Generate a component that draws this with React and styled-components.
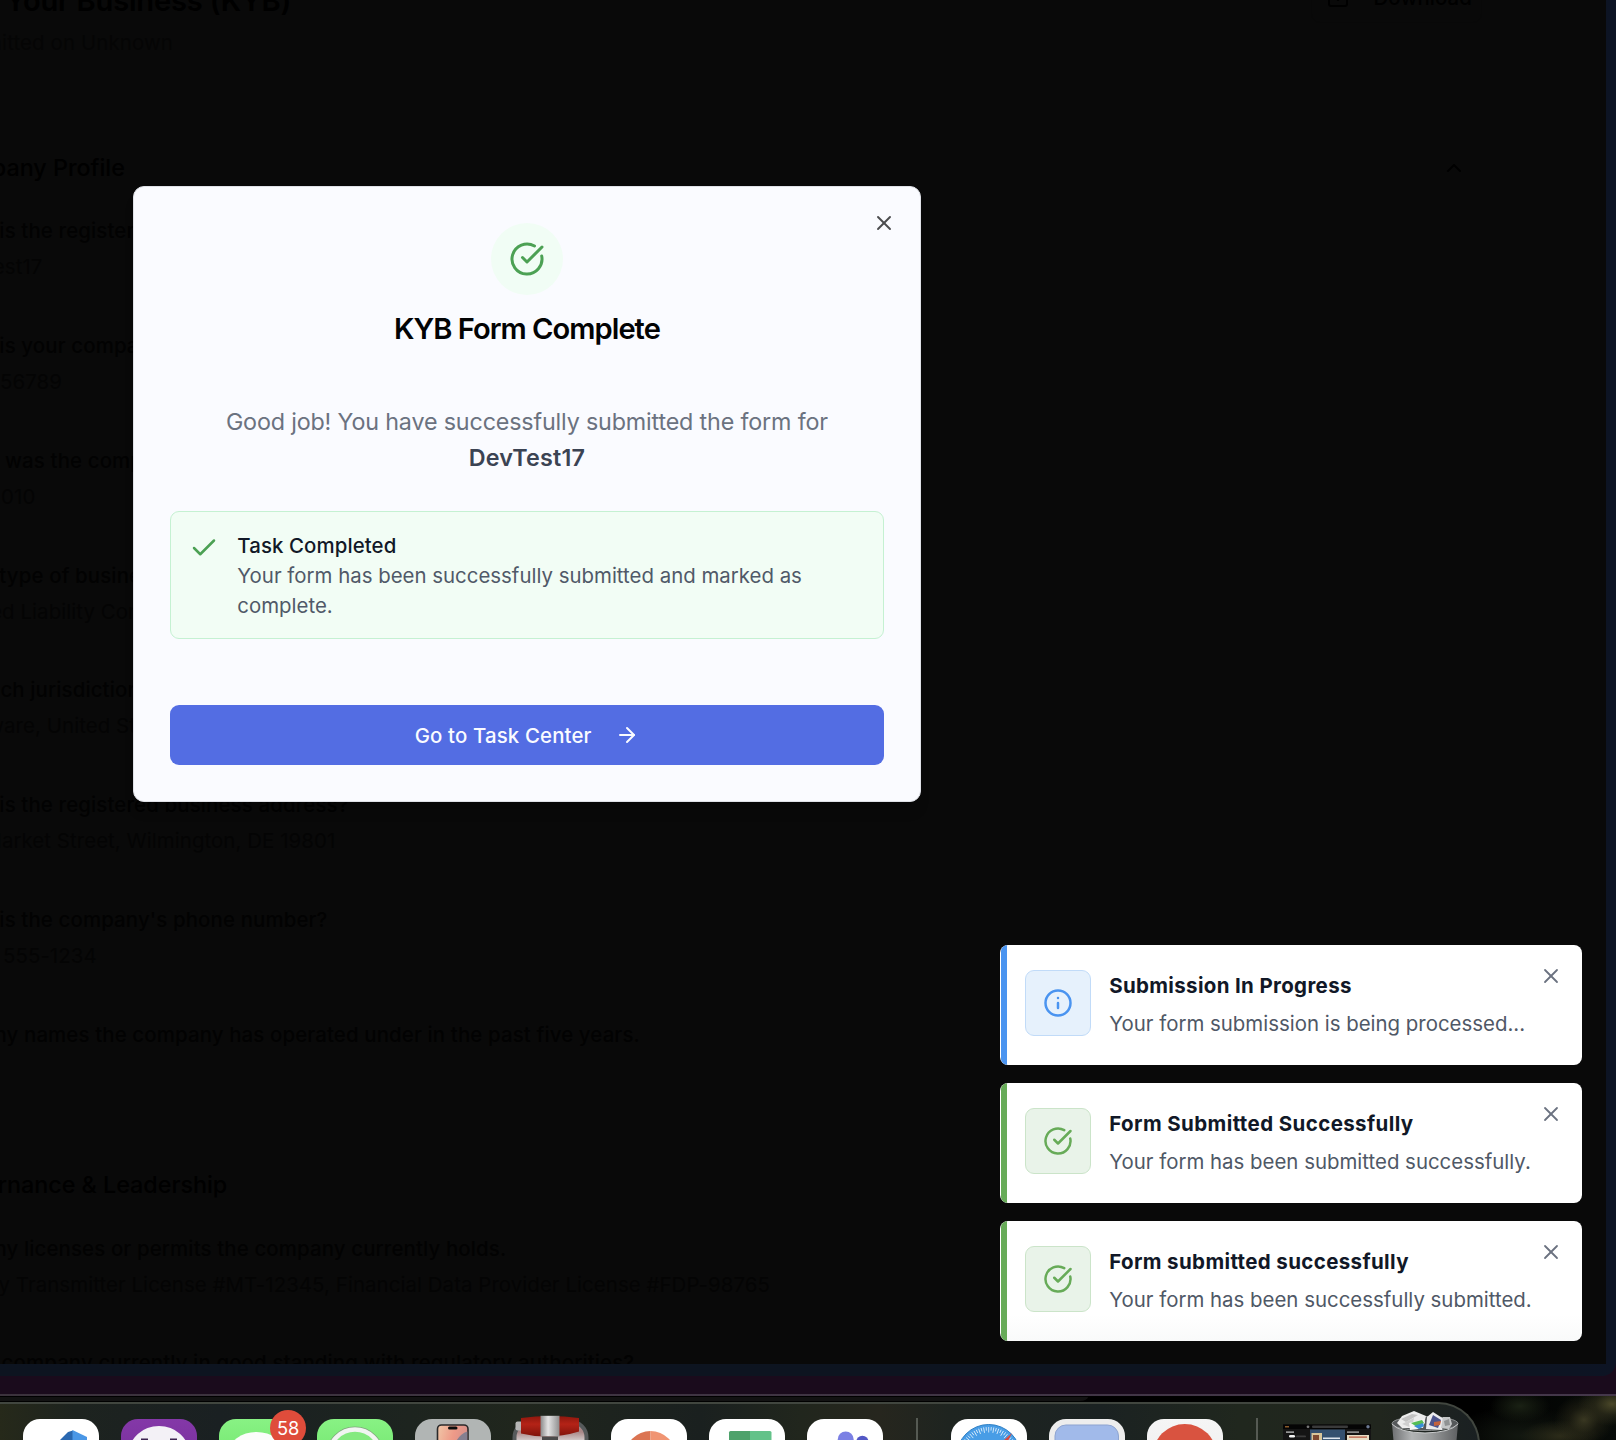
import React from "react";
import styled, { createGlobalStyle } from "styled-components";
import { ArrowRight, Check, ChevronUp, CircleCheckBig, Download, Info, X } from "lucide-react";

const Global = createGlobalStyle`
  * { box-sizing: border-box; }
  body {
    margin: 0;
    background: #000;
    font-family: Inter, "Liberation Sans", sans-serif;
    -webkit-font-smoothing: antialiased;
  }
  h1, h2, h3, p { margin: 0; }
  button { font: inherit; border: 0; background: none; padding: 0; }
  svg { display: block; flex: none; }
`;

/* ---------- desktop and browser window ---------- */

const Desktop = styled.div`
  position: relative;
  width: 1616px;
  height: 1440px;
  overflow: hidden;
  display: flex;
  flex-direction: column;
  background: #000;
`;

const Backdrop = styled.div`
  background: #1a0b1c;
  height: 1394px;
  flex: none;
`;

const Window = styled.div`
  height: 1376px;
  padding: 0 10px 12px 0;
  background: linear-gradient(90deg, #0d1420 0%, #0d1420 90%, #0d1424 100%);
  border-bottom-right-radius: 14px;
`;

const Page = styled.main`
  height: 1364px;
  overflow: hidden;
  background: #090909;
  display: flex;
  flex-direction: column;
`;

const PageHeader = styled.header`
  display: flex;
  justify-content: space-between;
  align-items: flex-start;
  flex: none;
  height: 80px;
  margin: -22px 124px 91.5px 0;
`;

const HeaderText = styled.div`
  margin-left: -81px;
  white-space: nowrap;
`;

const PageTitle = styled.h1`
  margin-bottom: 5px;
  font-size: 29.1px;
  line-height: 45px;
  font-weight: 600;
  letter-spacing: -0.2px;
  color: #000;
`;

const PageMeta = styled.p`
  margin-left: 27px;
  font-size: 20.4px;
  line-height: 30px;
  letter-spacing: 0.14px;
  color: #050505;
`;

const DownloadButton = styled.button`
  display: flex;
  align-items: center;
  gap: 23px;
  height: 52px;
  margin-top: -7px;
  padding: 0 9px 0 14px;
  border: 1px solid #080808;
  border-radius: 9px;
  font-size: 20.4px;
  font-weight: 500;
  letter-spacing: 0.1px;
  color: #000;
`;

const Section = styled.section`
  flex: none;
  margin: 0 0 78px -58px;
  white-space: nowrap;
`;

const SectionHead = styled.div`
  display: flex;
  align-items: center;
  justify-content: space-between;
  height: 36px;
  margin: 0 140px 27.4px -2px;
  color: #000;
`;

const SectionTitle = styled.h2`
  font-size: 23.3px;
  line-height: 36px;
  font-weight: 500;
`;

const Answers = styled.div`
  display: flex;
  flex-direction: column;
  gap: 42.9px;
`;

const Question = styled.p`
  font-size: 20.4px;
  line-height: 36px;
  font-weight: 500;
  letter-spacing: 0.14px;
  color: #020202;
`;

const Answer = styled.p`
  height: 36px;
  margin-left: 2px;
  font-size: 20.4px;
  line-height: 36px;
  letter-spacing: 0.08px;
  color: #040404;
`;

/* ---------- completion dialog ---------- */

const Dialog = styled.div`
  position: absolute;
  left: 133.3px;
  top: 186px;
  width: 788.2px;
  height: 615.7px;
  padding: 36px 36px 0;
  border: 1px solid #dfe1e7;
  border-radius: 11px;
  background: #fafbff;
  box-shadow: 0 12px 14px -6px rgba(0, 0, 0, 0.25);
  display: flex;
  flex-direction: column;
  align-items: center;
`;

const DialogClose = styled.button`
  position: absolute;
  top: 24px;
  right: 24.2px;
  color: #4b4c4e;
`;

const Medal = styled.div`
  width: 72px;
  height: 72px;
  border-radius: 50%;
  background: #f1fdf5;
  color: #4ca154;
  display: grid;
  place-items: center;
`;

const DialogTitle = styled.h2`
  margin: 15.5px 0 0 -1px;
  font-size: 29.1px;
  line-height: 36px;
  font-weight: 600;
  letter-spacing: -0.97px;
  color: #020304;
`;

const DialogText = styled.p`
  margin: 57px 0 0 -1px;
  text-align: center;
  font-size: 23.3px;
  line-height: 36px;
  letter-spacing: -0.16px;
  white-space: nowrap;
  color: #6b7280;
`;

const Company = styled.strong`
  display: block;
  font-weight: 600;
  letter-spacing: 0.2px;
  color: #3b4353;
`;

const Notice = styled.div`
  display: flex;
  gap: 18px;
  width: 100%;
  height: 127.7px;
  margin-top: 35.7px;
  padding: 18px;
  border: 1px solid #c5f1d2;
  border-radius: 9px;
  background: #f2fdf5;
  color: #4ca154;

  & > svg { margin-top: 3px; }
  & > div { padding-top: 1px; }
`;

const NoticeTitle = styled.h3`
  font-size: 20.4px;
  line-height: 30px;
  font-weight: 500;
  letter-spacing: 0.1px;
  color: #111827;
`;

const NoticeText = styled.p`
  font-size: 20.4px;
  line-height: 30px;
  letter-spacing: 0.01px;
  color: #505968;
`;

const PrimaryButton = styled.button`
  display: flex;
  align-items: center;
  justify-content: center;
  gap: 23.5px;
  width: 100%;
  height: 60px;
  margin-top: 66.3px;
  padding-right: 1px;
  border-radius: 9px;
  background: #536de3;
  color: #fafbff;
  font-size: 20.4px;
  font-weight: 500;
  letter-spacing: 0.14px;
`;

/* ---------- toasts ---------- */

const tones = {
  info: { bar: "#4a94f0", tint: "#e6f1fc", edge: "#c1dbf8" },
  success: { bar: "#67ab58", tint: "#e9f3e9", edge: "#cbe4c9" },
};

const ToastStack = styled.div`
  position: absolute;
  left: 1000px;
  top: 945px;
  display: flex;
  flex-direction: column;
  gap: 18px;
`;

const Toast = styled.div`
  width: 582px;
  height: 120px;
  padding-left: 1px;
  border-radius: 8px;
  background: ${(p) => (p.$last ? "linear-gradient(#fff 78%, #f9fafa)" : "#fff")};
  display: flex;
  overflow: hidden;
`;

const ToastBar = styled.div`
  width: 6px;
  flex: none;
  margin-right: 18px;
  border-radius: 7px 0 0 7px / 7px 0 0 7px;
  background: ${(p) => tones[p.$tone].bar};
`;

const ToastIcon = styled.div`
  width: 66px;
  height: 66px;
  flex: none;
  margin: 25px 18.2px 0 0;
  border: 1px solid ${(p) => tones[p.$tone].edge};
  border-radius: 9px;
  background: ${(p) => tones[p.$tone].tint};
  color: ${(p) => tones[p.$tone].bar};
  display: grid;
  place-items: center;
`;

const ToastBody = styled.div`
  flex: 1;
  padding-top: 25.6px;
  white-space: nowrap;
`;

const ToastTitle = styled.h3`
  font-size: 20.5px;
  line-height: 30px;
  font-weight: 700;
  letter-spacing: ${(p) => p.$spacing}px;
  color: #111827;
`;

const ToastText = styled.p`
  margin-top: 8px;
  font-size: 20.4px;
  line-height: 30px;
  letter-spacing: 0.01px;
  color: #4f5866;
`;

const ToastClose = styled.button`
  align-self: flex-start;
  margin: 19px 19px 0 0;
  color: #6b7280;
`;

/* ---------- dock ---------- */

const WindowEdge = styled.div`
  height: 2px;
  flex: none;
  background: linear-gradient(90deg, #3b323c, #44374a);
`;

const Wallpaper = styled.div`
  flex: 1;
  padding-top: 1px;
  background:
    radial-gradient(ellipse 34px 22px at 1612px 8px, #4b4829 0%, rgba(56, 54, 32, 0.5) 50%, transparent 100%),
    radial-gradient(ellipse 30px 26px at 1584px 24px, rgba(70, 67, 40, 0.8) 0%, rgba(46, 44, 26, 0.45) 50%, transparent 100%),
    radial-gradient(ellipse 40px 16px at 1560px 40px, rgba(58, 56, 32, 0.7) 0%, transparent 100%),
    radial-gradient(ellipse 30px 16px at 1520px 10px, #1a2114 0%, transparent 100%),
    radial-gradient(ellipse 70px 30px at 1520px 40px, #121710 0%, transparent 100%),
    linear-gradient(90deg, #000 1480px, #070b08 1616px);
`;

const UnderWindow = styled.div`
  width: 1088px;
  height: 4px;
  margin-bottom: 1px;
  background: #121212;
  border-bottom-right-radius: 8px 4px;
`;

const DockBar = styled.div`
  display: flex;
  width: 1480px;
  height: 60px;
  padding: 15px 0 0 23.2px;
  border: solid #41463f;
  border-width: 2px 2px 0 0;
  border-top-right-radius: 42px;
  background: linear-gradient(
    90deg,
    #26291a 0px,
    #1d231f 75px,
    #1a2022 220px,
    #1d241f 410px,
    #20261d 520px,
    #1a201f 700px,
    #21261d 800px,
    #26261e 880px,
    #1e2420 950px,
    #1b2222 1100px,
    #20271e 1240px,
    #21261e 1380px,
    #1a2022 1480px
  );
`;

const DockIcon = styled.div`
  position: relative;
  width: 75.6px;
  height: 75.6px;
  flex: none;
  margin-right: ${(p) => p.$gap ?? 22.4}px;
`;

const Tile = styled.svg.attrs((p) => ({
  viewBox: `0 0 ${p.$w ?? 75.6} 75.6`,
  width: p.$w ?? 75.6,
  height: 75.6,
}))`
  border-radius: ${(p) => (p.$bare ? 0 : 17)}px;
  overflow: ${(p) => (p.$bare ? "visible" : "hidden")};
  background: ${(p) => p.$bg};
`;

const Badge = styled.span`
  position: absolute;
  left: 51px;
  top: -9px;
  width: 36px;
  height: 36px;
  border-radius: 50%;
  background: #df4c3b;
  color: #fff;
  font-size: 18.3px;
  line-height: 36px;
  text-align: center;
`;

const DockDivider = styled.div`
  width: 2px;
  height: 70px;
  flex: none;
  margin: -1px ${(p) => p.$after}px 0 0;
  background: #555a53;
`;

const fields = {
  profile: [
    ["What is the registered name?", "DevTest17"],
    ["What is your company's tax ID?", "12-3456789"],
    ["When was the company formed?", "10/1/2010"],
    ["What type of business is it?", "Limited Liability Company"],
    ["In which jurisdiction?", "Delaware, United States"],
    ["What is the registered business address?", "123 Market Street, Wilmington, DE 19801"],
    ["What is the company's phone number?", "(302) 555-1234"],
    ["List any names the company has operated under in the past five years.", ""],
  ],
  governance: [
    [
      "List any licenses or permits the company currently holds.",
      "Money Transmitter License #MT-12345, Financial Data Provider License #FDP-98765",
    ],
    ["Is the company currently in good standing with regulatory authorities?", ""],
  ],
};

function FormSection({ title, items, open }) {
  return (
    <Section>
      <SectionHead>
        <SectionTitle>{title}</SectionTitle>
        {open && <ChevronUp size={24} strokeWidth={2} />}
      </SectionHead>
      <Answers>
        {items.map(([q, a]) => (
          <div key={q}>
            <Question>{q}</Question>
            <Answer>{a}</Answer>
          </div>
        ))}
      </Answers>
    </Section>
  );
}

const toasts = [
  { tone: "info", title: "Submission In Progress", text: "Your form submission is being processed...", spacing: 0.34 },
  { tone: "success", title: "Form Submitted Successfully", text: "Your form has been submitted successfully.", spacing: 0.4 },
  { tone: "success", title: "Form submitted successfully", text: "Your form has been successfully submitted.", spacing: 0.37 },
];

const ticks = Array.from({ length: 61 }, (_, i) => -150 + i * 5);

function Dock() {
  return (
    <DockBar>
      <DockIcon>
        <Tile $bg="#fff">
          <path d="M30 30 L37 21 L45 13 L50 11.5 V30Z" fill="#2a68b0" />
          <path d="M49.5 11 L64 18 V30 H49.5Z" fill="#4a97e6" />
        </Tile>
      </DockIcon>
      <DockIcon>
        <Tile $bg="linear-gradient(#8438a8, #6f2a92)">
          <ellipse cx="38" cy="34" rx="30" ry="27" fill="#f3f1f6" />
          <path d="M21 22 v-1.5 h6 M55 22 v-1.5 h-6" stroke="#3c2450" strokeWidth="2" fill="none" />
        </Tile>
      </DockIcon>
      <DockIcon>
        <Tile $bg="linear-gradient(#88f284, #62dc60)">
          <ellipse cx="37.5" cy="34" rx="28" ry="21" fill="#fbfdfb" />
        </Tile>
        <Badge>58</Badge>
      </DockIcon>
      <DockIcon>
        <Tile $bg="linear-gradient(#88f284, #62dc60)">
          <circle cx="38" cy="36.5" r="26" fill="none" stroke="#7fa67c" strokeWidth="6" />
          <circle cx="38" cy="36.5" r="26" fill="#84ea7f" stroke="#f1f5f1" strokeWidth="4.5" />
        </Tile>
      </DockIcon>
      <DockIcon>
        <Tile $bg="#b1b5b4">
          <defs>
            <linearGradient id="phone" x1="0" y1="0" x2="1" y2="0.6">
              <stop offset="0" stopColor="#f0c8a8" />
              <stop offset="0.45" stopColor="#ee9a88" />
              <stop offset="1" stopColor="#c98a8c" />
            </linearGradient>
          </defs>
          <rect x="22.5" y="6" width="30.5" height="62" rx="4" fill="url(#phone)" stroke="#2b2a2b" strokeWidth="1.6" />
          <path d="M38 30 Q42 16 52.3 12.5 V30Z" fill="#857f90" />
          <rect x="33" y="7.5" width="9.5" height="3" rx="1.5" fill="#0c0c0c" />
        </Tile>
      </DockIcon>
      <DockIcon>
        <Tile $bare $bg="transparent">
          <defs>
            <linearGradient id="band" x1="0" y1="0" x2="1" y2="0">
              <stop offset="0" stopColor="#8a8a8a" />
              <stop offset="0.4" stopColor="#e4e4e4" />
              <stop offset="1" stopColor="#8e8e8e" />
            </linearGradient>
            <linearGradient id="body" x1="0" y1="0" x2="0" y2="1">
              <stop offset="0" stopColor="#8e170d" />
              <stop offset="0.4" stopColor="#b42317" />
              <stop offset="1" stopColor="#7f130b" />
            </linearGradient>
            <linearGradient id="panel" x1="0" y1="0" x2="0" y2="1">
              <stop offset="0.15" stopColor="#a88" />
              <stop offset="0.3" stopColor="#dcdada" />
            </linearGradient>
          </defs>
          <rect x="1.5" y="2.5" width="72" height="70" rx="16" fill="url(#panel)" stroke="#565a5b" strokeWidth="4" />
          <rect x="2.5" y="2.5" width="7" height="9" rx="2" fill="#b5b5b5" />
          <path d="M8 -1 Q37 -5 66 -1 V12.5 Q37 21.5 8 14.5Z" fill="url(#body)" />
          <path d="M27.5 -3.2 h19 V17.5 h-19Z" fill="url(#band)" />
          <path d="M29 17.5 h16 v6 h-16Z" fill="#4b4b4b" />
        </Tile>
      </DockIcon>
      <DockIcon>
        <Tile $bg="#fff">
          <path d="M39.5 12 a25.5 25.5 0 0 0 0 51Z" fill="#db7452" />
          <path d="M39.5 12 a25.5 25.5 0 0 1 0 51Z" fill="#f09573" />
        </Tile>
      </DockIcon>
      <DockIcon>
        <Tile $bg="#fff">
          <path d="M20 30 V13.5 q0-1.5 1.5-1.5 H41 V30Z" fill="#4ea26b" />
          <path d="M41 12 H61 q1.5 0 1.5 1.5 V30 H41Z" fill="#63c289" />
        </Tile>
      </DockIcon>
      <DockIcon $gap={33.6}>
        <Tile $bg="#fff">
          <circle cx="38.7" cy="20.5" r="8" fill="#7b80e4" />
          <circle cx="55.4" cy="23" r="6.2" fill="#5358c5" />
        </Tile>
      </DockIcon>
      <DockDivider $after={33} />
      <DockIcon>
        <Tile $bg="#fff">
          <circle cx="37.7" cy="37.5" r="32" fill="#489de6" stroke="#2f7fc4" strokeWidth="1" />
          {ticks.map((d, i) => (
            <path
              key={d}
              d={`M37.7 8 v${i % 2 ? 3.5 : 5.5}`}
              stroke="#e8f3fc"
              strokeWidth="0.8"
              transform={`rotate(${d} 37.7 37.5)`}
            />
          ))}
          <path d="M61 14 L43 30 L50 36Z" fill="#d9483f" />
        </Tile>
      </DockIcon>
      <DockIcon>
        <Tile $bg="#ededed">
          <rect x="6" y="6" width="63.5" height="60" rx="11" fill="#a1baea" stroke="#8ea4d0" strokeWidth="1" />
        </Tile>
      </DockIcon>
      <DockIcon $gap={33.5}>
        <Tile $bg="linear-gradient(#f5f5f5, #ececec)">
          <circle cx="37.8" cy="37" r="32" fill="#d95340" />
        </Tile>
      </DockIcon>
      <DockDivider $after={25} />
      <DockIcon $gap={33}>
        <Tile $bare $bg="transparent" $w={89}>
          <rect x="0" y="5.5" width="88" height="50" fill="#141414" />
          <rect x="0" y="5.5" width="88" height="4.5" fill="#050505" />
          <rect x="2" y="7" width="4" height="1.5" fill="#8a5a2a" />
          <rect x="29" y="6.5" width="36" height="2.5" rx="1" fill="#3a3a3a" />
          <circle cx="25" cy="7.8" r="1.4" fill="#777" />
          <circle cx="85" cy="7.8" r="1.7" fill="#6c7a94" />
          <rect x="27" y="10.5" width="35" height="20" fill="#34506f" />
          <rect x="28.5" y="14" width="10.5" height="12" fill="#d8c59a" />
          <rect x="30" y="16" width="6" height="6" fill="#7e4a32" />
          <rect x="40" y="18.5" width="17" height="1.6" fill="#dfe6ee" />
          <rect x="3" y="12.5" width="8" height="1.2" fill="#ccc" />
          <rect x="6" y="16" width="6" height="2.6" rx="1.3" fill="#f2f2f2" />
          <rect x="13" y="16.5" width="10" height="1.8" rx="0.9" fill="#3a3a3a" />
          <rect x="64" y="12.5" width="12" height="1.2" fill="#bbb" />
          <rect x="64" y="16" width="22" height="8" fill="#e6ddc4" />
          <rect x="66" y="17.5" width="18" height="1.2" fill="#b5533c" />
        </Tile>
      </DockIcon>
      <DockIcon $gap={0}>
        <Tile $bare $bg="transparent">
          <defs>
            <linearGradient id="can" x1="0" y1="0" x2="1" y2="0">
              <stop offset="0" stopColor="#6e7072" />
              <stop offset="0.3" stopColor="#b2b4b5" />
              <stop offset="0.6" stopColor="#97999a" />
              <stop offset="1" stopColor="#5f6163" />
            </linearGradient>
          </defs>
          <ellipse cx="33" cy="4.5" rx="33" ry="7" fill="#55585a" stroke="#8d9091" strokeWidth="1" />
          <path d="M5 4 L10 -3 L22 -8 L34 -3 L31 9 L10 9Z" fill="#ececec" />
          <path d="M9 0 L20 -5 L26 -4 L14 3Z" fill="#c2c2c2" />
          <path d="M10 5 L22 -1 L20 9Z" fill="#cfcfcf" />
          <path d="M17 4 L32 0 L33 4 L26 10 L18 11Z" fill="#f6f6f6" />
          <path d="M19 4 L30 1 L32 4 L25 8Z" fill="#56bd55" />
          <path d="M22 7 L31 4 L32 7 L27 10Z" fill="#3a8fd6" />
          <path d="M34 10 L35 -2 L41 -7 L52 0 L50 11Z" fill="#ebebed" />
          <path d="M37 6 L41 -4 L49 1 L46 9Z" fill="#4d548c" />
          <path d="M42 3 L49 2 L48 6 L42 7Z" fill="#c4623c" />
          <path d="M49 9 L51 -2 L58 -2 L60 5 L57 10Z" fill="#c4c6c7" />
          <path d="M52 2 L57 0 L58 6 L53 7Z" fill="#8f9293" />
          <path d="M0 5 Q7.5 13.5 33 14 Q58.5 13.5 66 5 L60.5 66 Q33 74 5.5 66Z" fill="url(#can)" />
          <path d="M0 5 Q7.5 13.5 33 14 Q58.5 13.5 66 5" fill="none" stroke="#c9cbcc" strokeWidth="1" />
        </Tile>
      </DockIcon>
    </DockBar>
  );
}

export default function App() {
  return (
    <>
      <Global />
      <Desktop>
        <Backdrop>
          <Window>
            <Page>
              <PageHeader>
                <HeaderText>
                  <PageTitle>Know Your Business (KYB)</PageTitle>
                  <PageMeta>Submitted on Unknown</PageMeta>
                </HeaderText>
                <DownloadButton>
                  <Download size={24} strokeWidth={2} />
                  Download
                </DownloadButton>
              </PageHeader>
              <FormSection title="Company Profile" items={fields.profile} open />
              <FormSection title="Governance & Leadership" items={fields.governance} />
            </Page>
          </Window>
        </Backdrop>
        <WindowEdge />
        <Wallpaper>
          <UnderWindow />
          <Dock />
        </Wallpaper>

        <Dialog>
          <DialogClose aria-label="Close">
            <X size={24} strokeWidth={1.9} />
          </DialogClose>
          <Medal>
            <CircleCheckBig size={36} strokeWidth={2} />
          </Medal>
          <DialogTitle>KYB Form Complete</DialogTitle>
          <DialogText>
            Good job! You have successfully submitted the form for
            <Company>DevTest17</Company>
          </DialogText>
          <Notice>
            <Check size={30} strokeWidth={2} />
            <div>
              <NoticeTitle>Task Completed</NoticeTitle>
              <NoticeText>Your form has been successfully submitted and marked as complete.</NoticeText>
            </div>
          </Notice>
          <PrimaryButton>
            Go to Task Center
            <ArrowRight size={24} strokeWidth={2} />
          </PrimaryButton>
        </Dialog>

        <ToastStack>
          {toasts.map((t, i) => (
            <Toast key={t.title} $last={i === 2}>
              <ToastBar $tone={t.tone} />
              <ToastIcon $tone={t.tone}>
                {t.tone === "info" ? <Info size={30} strokeWidth={2} /> : <CircleCheckBig size={30} strokeWidth={2} />}
              </ToastIcon>
              <ToastBody>
                <ToastTitle $spacing={t.spacing}>{t.title}</ToastTitle>
                <ToastText>{t.text}</ToastText>
              </ToastBody>
              <ToastClose aria-label="Dismiss">
                <X size={24} strokeWidth={1.8} />
              </ToastClose>
            </Toast>
          ))}
        </ToastStack>
      </Desktop>
    </>
  );
}
